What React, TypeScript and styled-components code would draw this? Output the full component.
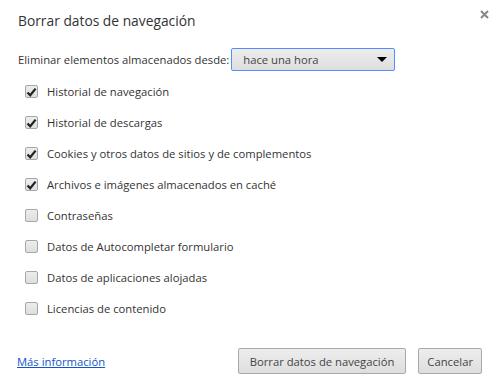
import React from "react";
import styled, { createGlobalStyle } from "styled-components";

const GlobalStyle = createGlobalStyle`
  html, body {
    margin: 0;
    padding: 0;
    background: #fff;
  }
  body {
    font-family: "Open Sans", "Noto Sans", Arial, sans-serif;
    color: #333;
  }
`;

const Dialog = styled.div`
  width: 499px;
  height: 385px;
  box-sizing: border-box;
  padding: 0 17px 0 18px;
  display: flex;
  flex-direction: column;
  position: relative;
  background: #fff;
`;

const Title = styled.h1`
  margin: 0;
  padding-top: 11px;
  height: 40px;
  box-sizing: border-box;
  font-size: 13.8px;
  font-weight: 400;
  color: #333;
`;

const Close = styled.button`
  position: absolute;
  top: 8px;
  right: 9px;
  width: 12px;
  height: 12px;
  padding: 0;
  border: 0;
  background: transparent;
  display: flex;
  align-items: center;
  justify-content: center;
`;

const RangeRow = styled.div`
  display: flex;
  align-items: center;
  gap: 3px;
  height: 27px;
  margin-top: 6px;
  font-size: 11.25px;
`;

const Select = styled.div`
  width: 164px;
  height: 23px;
  box-sizing: border-box;
  border: 1px solid #4d90fe;
  border-radius: 2px;
  background: linear-gradient(#ededed, #dedede);
  display: flex;
  align-items: center;
  justify-content: space-between;
  padding: 0 7px 0 11px;
  margin-left: -1px;
  font-size: 11.25px;
  color: #444;
`;

const Arrow = styled.span`
  width: 0;
  height: 0;
  border-left: 5px solid transparent;
  border-right: 5px solid transparent;
  border-top: 5px solid #000;
`;

const List = styled.div`
  display: flex;
  flex-direction: column;
  margin-top: 3px;
`;

const Item = styled.label`
  display: flex;
  align-items: center;
  gap: 9px;
  height: 31px;
  padding-left: 7px;
  font-size: 11.25px;
  color: #333;
`;

const Box = styled.span`
  width: 13px;
  height: 13px;
  box-sizing: border-box;
  border: 1px solid #a7a7a7;
  border-radius: 2px;
  background: linear-gradient(#ededed, #dedede);
  display: flex;
  align-items: center;
  justify-content: center;
`;

const Footer = styled.div`
  margin-top: auto;
  margin-bottom: 11px;
  height: 26px;
  display: flex;
  align-items: center;
  justify-content: space-between;
`;

const Link = styled.a`
  font-size: 11.25px;
  color: #15c;
  text-decoration: underline;
  margin-left: -1px;
`;

const Buttons = styled.div`
  display: flex;
  gap: 12px;
`;

const Button = styled.button<{ $pad: number }>`
  height: 26px;
  box-sizing: border-box;
  padding: 0 ${(p) => p.$pad}px;
  border: 1px solid #a9a9a9;
  border-radius: 2px;
  background: linear-gradient(#ededed, #dedede);
  font-family: inherit;
  font-size: 11.25px;
  color: #444;
`;

const items: [string, boolean][] = [
  ["Historial de navegación", true],
  ["Historial de descargas", true],
  ["Cookies y otros datos de sitios y de complementos", true],
  ["Archivos e imágenes almacenados en caché", true],
  ["Contraseñas", false],
  ["Datos de Autocompletar formulario", false],
  ["Datos de aplicaciones alojadas", false],
  ["Licencias de contenido", false],
];

function Check() {
  return (
    <svg width="11" height="10" viewBox="0 0 11 10">
      <path d="M1.5 5.5 L4.2 8.3 L9.6 1.6" fill="none" stroke="#222" strokeWidth="2.2" />
    </svg>
  );
}

export default function App() {
  return (
    <>
      <GlobalStyle />
      <Dialog>
        <Title>Borrar datos de navegación</Title>
        <Close aria-label="Cerrar">
          <svg width="9" height="9" viewBox="0 0 9 9">
            <path d="M1 1 L8 8 M8 1 L1 8" stroke="#888" strokeWidth="2" />
          </svg>
        </Close>
        <RangeRow>
          <span>Eliminar elementos almacenados desde:</span>
          <Select>
            <span>hace una hora</span>
            <Arrow />
          </Select>
        </RangeRow>
        <List>
          {items.map(([label, checked]) => (
            <Item key={label}>
              <Box>{checked && <Check />}</Box>
              {label}
            </Item>
          ))}
        </List>
        <Footer>
          <Link href="#">Más información</Link>
          <Buttons>
            <Button $pad={11}>Borrar datos de navegación</Button>
            <Button $pad={8}>Cancelar</Button>
          </Buttons>
        </Footer>
      </Dialog>
    </>
  );
}
